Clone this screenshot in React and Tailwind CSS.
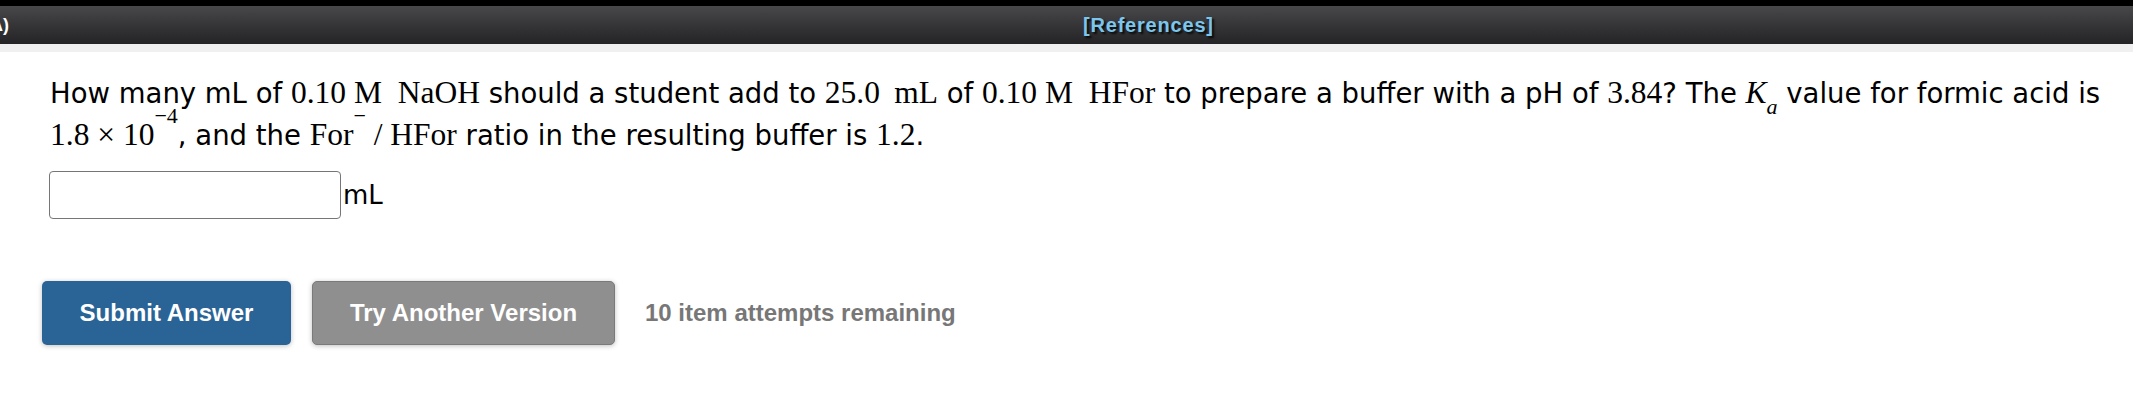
import React from "react";

const M = ({ children, className = "" }) => (
  <span className={"font-['Liberation_Serif',serif] text-[31.5px] " + className}>{children}</span>
);

export default function App() {
  return (
    <div className="w-[2133px] h-[400px] bg-white overflow-hidden font-['DejaVu_Sans',Verdana,sans-serif]">
      <div className="h-[6px] bg-black" />
      <div className="h-[38px] bg-linear-to-b from-[#48484a] to-[#242426] flex items-center overflow-hidden whitespace-nowrap">
        <span className="ml-[-10px] text-white font-bold text-[18px] font-['Liberation_Sans',Arial,sans-serif]">A)</span>
        <span className="ml-[1074px] text-[#7cc6ee] font-bold text-[20px] tracking-[0.8px] font-['Liberation_Sans',Arial,sans-serif] [text-shadow:2px_2px_2px_#0a0a0a]">
          [References]
        </span>
      </div>
      <div className="h-[8px] bg-[#f0f0f0]" />
      <div className="pl-[50px] pt-[20px]">
        <p className="text-[27.5px] leading-[41px] text-black">
          <span className="whitespace-nowrap">
            How many mL of <M>0.10&nbsp;M&nbsp;&nbsp;NaOH</M> should a student add to <M>25.0&nbsp;&#8201;mL</M> of{" "}
            <M>0.10&nbsp;M&nbsp;&nbsp;HFor</M> to prepare a buffer with a pH of <M>3.84</M>? The{" "}
            <M>
              <i>K</i>
              <sub className="text-[22px] italic leading-none align-[-5px]">a</sub>
            </M>{" "}
            value for formic acid is
          </span>
          <br />
          <span className="whitespace-nowrap">
            <M>
              1.8 × 10<sup className="text-[22px] leading-none align-[11px]">−4</sup>
            </M>
            , and the{" "}
            <M>
              For<sup className="text-[22px] leading-none align-[11px]">−</sup>&nbsp;/&nbsp;HFor
            </M>{" "}
            ratio in the resulting buffer is <M>1.2</M>.
          </span>
        </p>
        <div className="mt-[15px] flex items-center">
          <input
            type="text"
            className="ml-[-1px] w-[292px] h-[48px] border-[1.5px] border-[#767676] rounded-[4px] bg-white outline-none"
          />
          <span className="ml-[2px] text-[26px] text-black">mL</span>
        </div>
        <div className="mt-[62px] ml-[-8px] flex items-center font-['Liberation_Sans',Arial,sans-serif] font-bold">
          <button className="w-[249px] h-[64px] rounded-[5px] bg-[#2a6496] text-white text-[24px] shadow-[0_1px_5px_rgba(0,0,0,0.25)]">
            Submit Answer
          </button>
          <button className="ml-[21px] w-[303px] h-[64px] rounded-[5px] bg-[#8f8f8f] border border-[#7a7a7a] text-white text-[24px] shadow-[0_1px_5px_rgba(0,0,0,0.25)]">
            Try Another Version
          </button>
          <span className="ml-[30px] text-[#777777] text-[24px]">10 item attempts remaining</span>
        </div>
      </div>
    </div>
  );
}
